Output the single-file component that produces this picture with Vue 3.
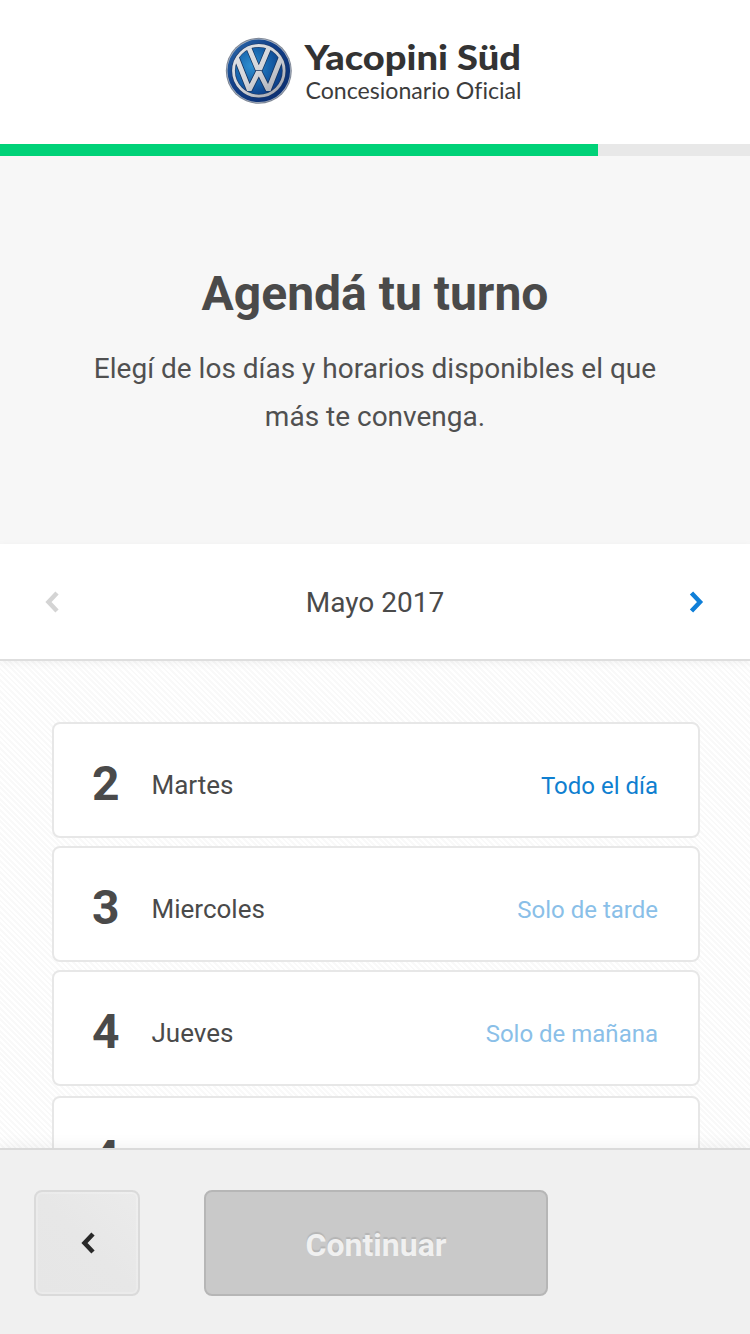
<script setup>
const days = [
  { number: 2, name: 'Martes', slot: 'Todo el día', full: true },
  { number: 3, name: 'Miercoles', slot: 'Solo de tarde' },
  { number: 4, name: 'Jueves', slot: 'Solo de mañana' },
  { number: 4, name: '', slot: '', last: true },
]
const progress = 598 / 7.5
</script>

<template>
  <div class="screen">
    <header class="brand">
      <svg class="logo" width="310" height="80" viewBox="220 32 310 80">
        <defs>
          <linearGradient id="rim" x1="0" y1="0" x2="1" y2="1">
            <stop offset="0" stop-color="#2f6fb0" />
            <stop offset=".4" stop-color="#123f88" />
            <stop offset="1" stop-color="#0a2c6c" />
          </linearGradient>
          <radialGradient id="disc" cx=".35" cy=".4" r=".65">
            <stop offset="0" stop-color="#2f8fd0" />
            <stop offset=".55" stop-color="#1763ac" />
            <stop offset="1" stop-color="#0b3c86" />
          </radialGradient>
          <linearGradient id="chrome" gradientUnits="userSpaceOnUse" x1="240" y1="50" x2="278" y2="92">
            <stop offset="0" stop-color="#dfe1e5" />
            <stop offset=".5" stop-color="#d3d5da" />
            <stop offset="1" stop-color="#a6aab3" />
          </linearGradient>
          <clipPath id="face"><circle cx="258.8" cy="70.8" r="25.300" /></clipPath>
        </defs>
        <circle cx="258.8" cy="70.8" r="33" fill="#7e8796" />
        <circle cx="258.8" cy="70.8" r="32" fill="#a9b3c2" />
        <circle cx="258.8" cy="70.8" r="31.300" fill="url(#rim)" />
        <circle cx="258.8" cy="70.8" r="25" fill="url(#disc)" />
        <circle cx="258.8" cy="70.8" r="25.300" fill="none" stroke="#243b62" stroke-width="4" />
        <g clip-path="url(#face)" fill="none" stroke-linejoin="miter" stroke-miterlimit="2">
          <path d="M233.800 51l15.500 39 8.300-16.500h2.400l8.300 16.500L283.800 51" stroke="#17345f" stroke-width="6.400" />
          <path d="M233.800 51l15.500 39 8.300-16.500h2.400l8.300 16.500L283.800 51" stroke="url(#chrome)" stroke-width="4.800" />
          <path d="M246.800 43l10.400 24.800h3.200l10.400-24.800" stroke="#17345f" stroke-width="6.200" />
          <path d="M246.800 43l10.400 24.800h3.200l10.400-24.800" stroke="url(#chrome)" stroke-width="4.800" />
        </g>
        <circle cx="258.8" cy="70.8" r="25.300" fill="none" stroke="url(#chrome)" stroke-width="2.800" />
        <text class="dealer" x="304.500" y="70" textLength="216.500" lengthAdjust="spacingAndGlyphs">Yacopini Süd</text>
        <text class="tagline" x="305.500" y="98.500" textLength="216" lengthAdjust="spacingAndGlyphs">Concesionario Oficial</text>
      </svg>
    </header>

    <div class="progress"><div class="bar" :style="{ width: progress + '%' }"></div></div>

    <section class="intro">
      <h1>Agendá tu turno</h1>
      <p>Elegí de los días y horarios disponibles el que<br />más te convenga.</p>
    </section>

    <nav class="month">
      <svg class="prev" width="20" height="28" viewBox="0 0 20 28"><path d="M16 5L7.500 14l8.500 9" /></svg>
      <span>Mayo 2017</span>
      <svg class="next" width="20" height="28" viewBox="0 0 20 28"><path d="M4.500 5L13 14l-8.500 9" /></svg>
    </nav>

    <main class="days">
      <article v-for="(d, i) in days" :key="i" class="day" :class="{ last: d.last }">
        <b>{{ d.number }}</b>
        <span class="name">{{ d.name }}</span>
        <span class="slot" :class="{ full: d.full }">{{ d.slot }}</span>
      </article>
    </main>

    <footer class="actions">
      <button class="back" aria-label="Volver">
        <svg width="20" height="28" viewBox="0 0 20 28"><path d="M16 5L7.500 14l8.500 9" /></svg>
      </button>
      <button class="continue">Continuar</button>
    </footer>
  </div>
</template>

<style>
body { background: #fff; overflow: hidden; }
</style>

<style scoped>
.screen {
  width: 750px;
  height: 1334px;
  display: flex;
  flex-direction: column;
  overflow: hidden;
  font-family: Roboto, sans-serif;
  color: #4a4a4a;
  background: #fff;
}
.screen > * { flex: none; box-sizing: border-box; }
.brand { height: 144px; padding: 32px 0 0 220px; }
.logo { display: block; }
.dealer { font: 900 35px Lato, sans-serif; fill: #333; }
.tagline { font: 400 23px Lato, sans-serif; fill: #3c3c3c; font-variant-ligatures: none; }
.progress { height: 12px; background: #e8e8e8; }
.bar { height: 100%; background: #00d278; }
.intro { height: 388px; padding-top: 106px; background: #f7f7f7; text-align: center; }
h1 { margin: 0; font-size: 48px; line-height: 64px; font-weight: 700; }
p { margin: 19px 0 0; font-size: 28px; line-height: 48px; color: #505050; }
.month {
  position: relative;
  z-index: 1;
  height: 117px;
  padding: 0 43px 0 41px;
  display: flex;
  align-items: center;
  justify-content: space-between;
  font-size: 28px;
  background: #fff;
  border-bottom: 2px solid #dedede;
  box-shadow: 0 2px 8px rgba(0, 0, 0, .05);
}
.month span { padding: 2px 0 0 2px; }
.month path, .back path { fill: none; stroke-width: 4.500; }
.prev path { stroke: #d4d4d4; }
.next path { stroke: #0f7fd8; }
.days {
  height: 487px;
  padding: 61px 50px 0 52px;
  overflow: hidden;
  background: repeating-linear-gradient(45deg, #fff 0 2px, #f9f9f9 2px 4px);
}
.day {
  box-sizing: border-box;
  height: 116px;
  margin-bottom: 8px;
  padding: 0 40px 0 38px;
  display: flex;
  align-items: center;
  background: #fff;
  border: 2px solid #e7e7e7;
  border-radius: 8px;
}
.last { margin-top: 10px; }
.day b { width: 59.500px; font-size: 48px; line-height: 56px; padding-top: 8px; }
.name { flex: 1; font-size: 26px; padding-top: 9px; }
.slot { font-size: 24px; padding-top: 11px; color: #8abfe8; }
.slot.full { color: #0f7fd0; }
.actions {
  position: relative;
  z-index: 1;
  height: 186px;
  padding: 40px 34px;
  display: flex;
  gap: 64px;
  background: #f0f0f0;
  border-top: 2px solid #dadada;
  box-shadow: 0 -2px 14px rgba(0, 0, 0, .06);
}
button { box-sizing: border-box; height: 106px; border-radius: 8px; padding: 0; }
.back {
  width: 106px;
  display: flex;
  align-items: center;
  justify-content: center;
  background: linear-gradient(45deg, #e6e6e6, #e7e7e7 50%, #ebebeb);
  border: 2px solid #dadada;
  box-shadow: inset 0 0 0 2px rgba(255, 255, 255, .2);
}
.back path { stroke: #292929; }
.continue {
  width: 344px;
  padding-top: 4px;
  font: 700 32px Roboto, sans-serif;
  color: #f0f0f0;
  background: #c9c9c9;
  border: 2px solid #b6b6b6;
  text-shadow: 0 -2px 1px rgba(0, 0, 0, .1);
}
</style>
